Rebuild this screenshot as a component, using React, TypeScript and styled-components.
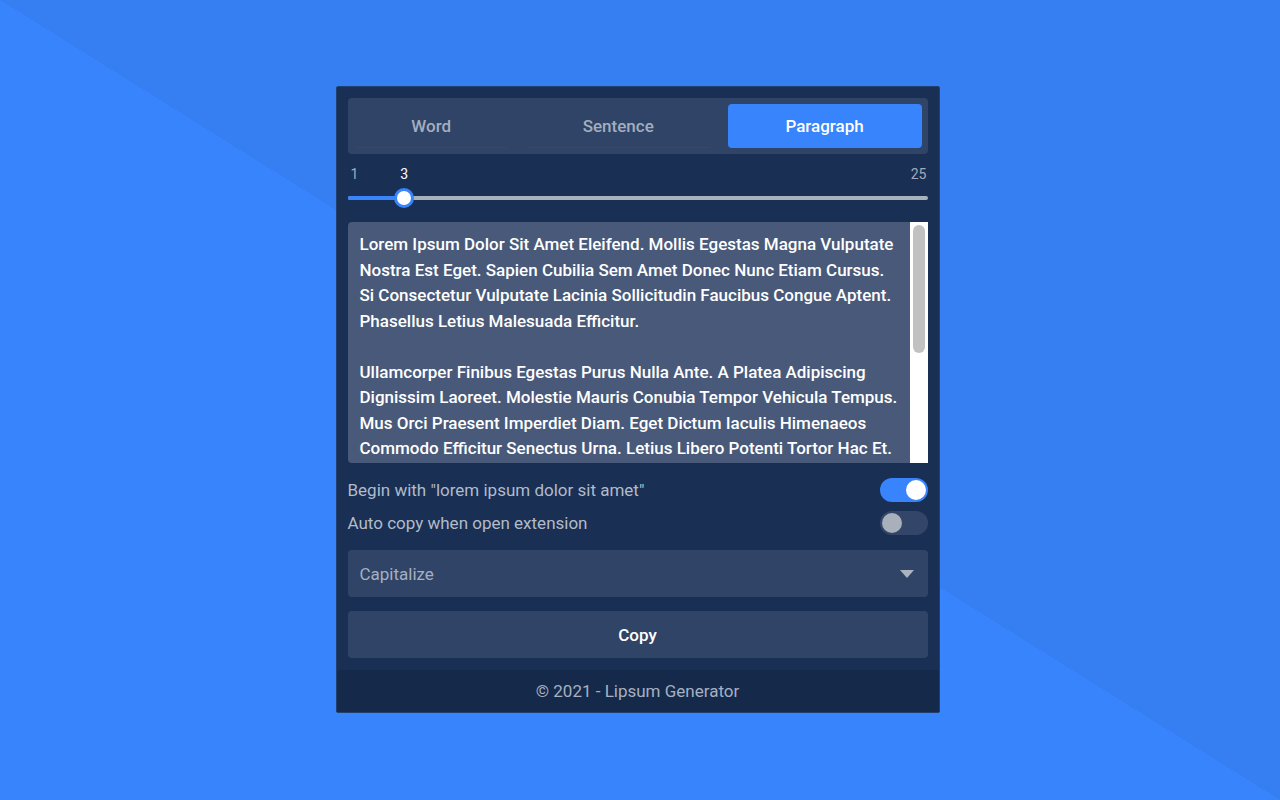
import { useState } from 'react'
import styled, { createGlobalStyle } from 'styled-components'

const GlobalStyle = createGlobalStyle`
  html, body, #root {
    margin: 0;
    height: 100%;
  }
  body {
    font-family: Roboto, "Noto Sans", "Liberation Sans", sans-serif;
    background: linear-gradient(to top right, #3884fd 50%, #357ff3 50%);
  }
`

const Stage = styled.div`
  display: flex;
  align-items: flex-start;
  justify-content: center;
  height: 100%;
  padding: 86px 5px 0 0;
  box-sizing: border-box;
`

const Panel = styled.div`
  width: 604px;
  background: #1a2f54;
  border: 1px solid #22406e;
  border-radius: 2px;
  box-sizing: border-box;
  overflow: hidden;
`

const Main = styled.div`
  display: flex;
  flex-direction: column;
  padding: 11px 11px 12px;
`

const Tabs = styled.div`
  display: flex;
  gap: 16px;
  height: 56px;
  padding: 6px;
  box-sizing: border-box;
  background: #2f4466;
  border-radius: 4px;
`

const Tab = styled.button<{ $active?: boolean }>`
  flex: 1 1 auto;
  border: none;
  border-radius: 4px;
  font: 500 17px Roboto, sans-serif;
  cursor: pointer;
  color: ${({ $active }) => ($active ? '#ffffff' : '#a3aebf')};
  background: ${({ $active }) => ($active ? '#3884fd' : 'transparent')};
  border-bottom: ${({ $active }) => ($active ? 'none' : '1px solid #33496d')};
`

const SliderBlock = styled.div`
  margin-top: 11px;
`

const Scale = styled.div`
  position: relative;
  display: flex;
  justify-content: space-between;
  height: 18px;
  padding: 0 1px 0 3px;
  font-size: 14px;
  line-height: 18px;
  color: #a1abbc;
`

const Current = styled.span`
  position: absolute;
  top: 0;
  transform: translateX(-50%);
  color: #ffffff;
`

const TrackArea = styled.div`
  position: relative;
  display: flex;
  align-items: center;
  height: 30px;
`

const Track = styled.div`
  width: 100%;
  height: 4px;
  border-radius: 2px;
  background: #a9b1bd;
  overflow: hidden;
`

const Fill = styled.div`
  height: 100%;
  background: #3884fd;
`

const Thumb = styled.div`
  position: absolute;
  top: 50%;
  width: 20px;
  height: 20px;
  box-sizing: border-box;
  border-radius: 50%;
  background: #ffffff;
  border: 3px solid #3884fd;
  transform: translate(-50%, -50%);
`

const TextBox = styled.div`
  display: flex;
  margin-top: 9px;
  height: 241px;
  background: #48597a;
  border-radius: 4px 0 0 4px;
  overflow: hidden;
`

const TextContent = styled.div`
  flex: 1;
  overflow: hidden;
  padding: 10px 10px 0 12px;
  color: #ffffff;
  font-size: 17px;
  font-weight: 500;
  line-height: 25.5px;

  p {
    margin: 0 0 25.5px;
  }
`

const ScrollTrack = styled.div`
  width: 18px;
  flex: none;
  padding: 3px;
  box-sizing: border-box;
  background: #ffffff;
`

const ScrollThumb = styled.div`
  height: 128px;
  border-radius: 6px;
  background: #c1c1c1;
`

const Options = styled.div`
  display: flex;
  flex-direction: column;
  gap: 9px;
  margin-top: 15px;
`

const OptionRow = styled.div`
  display: flex;
  align-items: center;
  justify-content: space-between;
  height: 24px;
  font-size: 17px;
  line-height: 20px;
  color: #b1bbca;
`

const Switch = styled.span<{ $on?: boolean }>`
  position: relative;
  flex: none;
  width: 48px;
  height: 24px;
  border-radius: 12px;
  background: ${({ $on }) => ($on ? '#3884fd' : '#33466a')};
  cursor: pointer;

  &::after {
    content: '';
    position: absolute;
    top: 2px;
    left: ${({ $on }) => ($on ? '26px' : '2px')};
    width: 20px;
    height: 20px;
    border-radius: 50%;
    background: ${({ $on }) => ($on ? '#ffffff' : '#a8b0bb')};
  }
`

const Select = styled.div`
  display: flex;
  align-items: center;
  justify-content: space-between;
  height: 47px;
  margin-top: 15px;
  padding: 0 14px 0 12px;
  background: #2f4466;
  border-radius: 4px;
  font-size: 17px;
  color: #a6b0c1;
`

const CopyButton = styled.button`
  height: 47px;
  margin-top: 14px;
  border: none;
  border-radius: 4px;
  background: #2f4466;
  color: #ffffff;
  font: 500 17px Roboto, sans-serif;
  cursor: pointer;
`

const Footer = styled.footer`
  height: 42px;
  display: flex;
  align-items: center;
  justify-content: center;
  background: #152a4b;
  color: #a6b0c1;
  font-size: 17px;
`

const paragraphs = [
  'Lorem Ipsum Dolor Sit Amet Eleifend. Mollis Egestas Magna Vulputate Nostra Est Eget. Sapien Cubilia Sem Amet Donec Nunc Etiam Cursus. Si Consectetur Vulputate Lacinia Sollicitudin Faucibus Congue Aptent. Phasellus Letius Malesuada Efficitur.',
  'Ullamcorper Finibus Egestas Purus Nulla Ante. A Platea Adipiscing Dignissim Laoreet. Molestie Mauris Conubia Tempor Vehicula Tempus. Mus Orci Praesent Imperdiet Diam. Eget Dictum Iaculis Himenaeos Commodo Efficitur Senectus Urna. Letius Libero Potenti Tortor Hac Et.',
]

const MIN = 1
const MAX = 25

export default function App() {
  const [mode, setMode] = useState('Paragraph')
  const [count] = useState(3)
  const [begin, setBegin] = useState(true)
  const [autoCopy, setAutoCopy] = useState(false)

  const ratio = (count - MIN) / (MAX - MIN)
  const pos = `calc(10px + ${ratio} * (100% - 20px))`

  return (
    <>
      <GlobalStyle />
      <Stage>
        <Panel>
          <Main>
            <Tabs>
              {['Word', 'Sentence', 'Paragraph'].map((t) => (
                <Tab key={t} type="button" $active={mode === t} onClick={() => setMode(t)}>
                  {t}
                </Tab>
              ))}
            </Tabs>

            <SliderBlock>
              <Scale>
                <span>{MIN}</span>
                <Current style={{ left: pos }}>{count}</Current>
                <span>{MAX}</span>
              </Scale>
              <TrackArea>
                <Track>
                  <Fill style={{ width: pos }} />
                </Track>
                <Thumb style={{ left: pos }} />
              </TrackArea>
            </SliderBlock>

            <TextBox>
              <TextContent>
                {paragraphs.map((p, i) => (
                  <p key={i}>{p}</p>
                ))}
              </TextContent>
              <ScrollTrack>
                <ScrollThumb />
              </ScrollTrack>
            </TextBox>

            <Options>
              <OptionRow>
                <span>Begin with "lorem ipsum dolor sit amet"</span>
                <Switch $on={begin} onClick={() => setBegin(!begin)} />
              </OptionRow>
              <OptionRow>
                <span>Auto copy when open extension</span>
                <Switch $on={autoCopy} onClick={() => setAutoCopy(!autoCopy)} />
              </OptionRow>
            </Options>

            <Select>
              Capitalize
              <svg width="14" height="8" viewBox="0 0 14 8">
                <path d="M0 0h14L7 8z" fill="#aab3bf" />
              </svg>
            </Select>

            <CopyButton type="button">Copy</CopyButton>
          </Main>
          <Footer>© 2021 - Lipsum Generator</Footer>
        </Panel>
      </Stage>
    </>
  )
}
